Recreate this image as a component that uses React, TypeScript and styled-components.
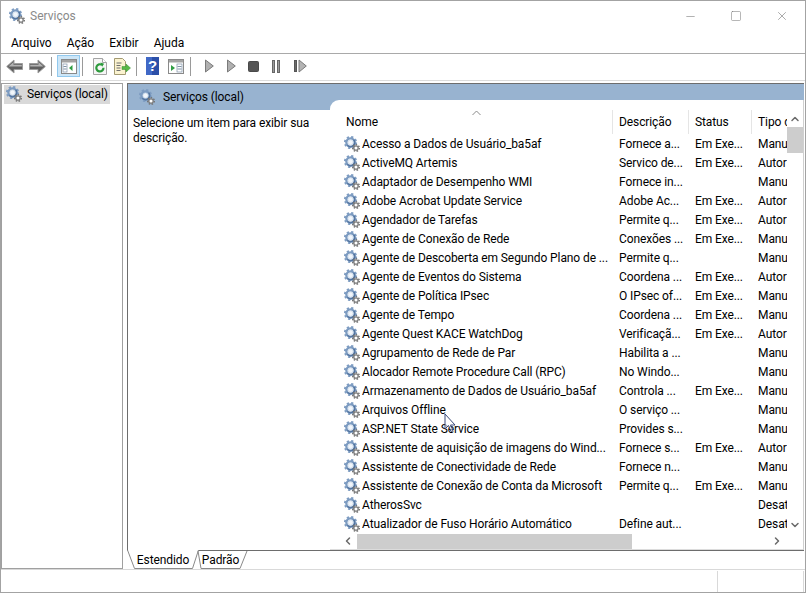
import React from "react";
import styled, { createGlobalStyle } from "styled-components";
import { Minus, Square, X, ChevronUp, ChevronDown, ChevronLeft, ChevronRight } from "lucide-react";

const GlobalStyle = createGlobalStyle`
  html, body {
    margin: 0;
    padding: 0;
    background: #fff;
  }
  body {
    font-family: Roboto, "Open Sans", sans-serif;
    font-size: 12px;
    letter-spacing: -0.1px;
    color: #000;
  }
`;

const Window = styled.div`
  position: relative;
  width: 806px;
  height: 593px;
  box-sizing: border-box;
  border: 1px solid #a3a3a3;
  display: flex;
  flex-direction: column;
  background: #fff;
  overflow: hidden;
`;

const TitleBar = styled.div`
  height: 32px;
  display: flex;
  align-items: center;
  padding: 0 0 2px 8px;
  box-sizing: border-box;
  flex: none;
`;

const Title = styled.div`
  margin-left: 5px;
  color: #8a8a8a;
  letter-spacing: 0;
  flex: 1;
`;

const WinButton = styled.div`
  width: 46px;
  display: flex;
  justify-content: center;
  color: #6f6f6f;
`;

const MenuBar = styled.div`
  height: 20px;
  display: flex;
  align-items: center;
  gap: 15px;
  padding-left: 10px;
  border-bottom: 1px solid #a9a9a9;
  letter-spacing: 0;
  flex: none;
`;

const ToolBar = styled.div`
  display: flex;
  align-items: center;
  padding: 0 0 2px 2px;
  height: 24px;
  border-bottom: 1px solid #dcdcdc;
  flex: none;
`;

const ToolSlot = styled.div<{ $active?: boolean; $w?: number }>`
  width: ${(p) => p.$w ?? 23}px;
  height: 22px;
  box-sizing: border-box;
  display: flex;
  align-items: center;
  justify-content: center;
  flex: none;
  background: ${(p) => (p.$active ? "#cde6f7" : "transparent")};
  border: 1px solid ${(p) => (p.$active ? "#92c9ee" : "transparent")};
`;

const ToolSep = styled.div<{ $l: number; $r: number }>`
  width: 1px;
  height: 19px;
  margin: 0 ${(p) => p.$r}px 0 ${(p) => p.$l}px;
  background: #9a9a9a;
  flex: none;
`;

const Body = styled.div`
  height: 488px;
  display: flex;
  gap: 4px;
  padding: 2px 1px 0 0;
  box-sizing: border-box;
  flex: none;
`;

const TreePane = styled.div`
  width: 122px;
  box-sizing: border-box;
  border: 1px solid #a0a0a0;
  padding: 1px 2px;
  flex: none;
`;

const TreeItem = styled.div`
  display: flex;
  align-items: center;
  gap: 5px;
  width: 106px;
  height: 19px;
  padding: 0 0 1px 2px;
  box-sizing: border-box;
  background: #d9d9d9;
`;

const Main = styled.div`
  flex: 1;
  min-width: 0;
  display: flex;
  flex-direction: column;
`;

const Content = styled.div`
  height: 468px;
  box-sizing: border-box;
  border: 1px solid #6d6d6d;
  border-width: 1px 0 1px 1px;
  display: flex;
  flex-direction: column;
  background: #98b3d0;
  flex: none;
`;

const Banner = styled.div`
  height: 26px;
  display: flex;
  align-items: center;
  gap: 8px;
  padding: 0 0 1px 11px;
  box-sizing: border-box;
  flex: none;
`;

const Split = styled.div`
  flex: 1;
  min-height: 0;
  margin-top: -10px;
  display: flex;
`;

const Blurb = styled.div`
  width: 202px;
  margin-top: 10px;
  padding: 6px 5px;
  box-sizing: border-box;
  background: #fff;
  line-height: 15px;
  flex: none;
`;

const ListPanel = styled.div`
  flex: 1;
  min-width: 0;
  background: #fff;
  border-top-left-radius: 9px;
  display: flex;
  flex-direction: column;
  border-right: 1px solid #d0d0d0;
`;

const ListArea = styled.div`
  flex: 1;
  min-height: 0;
  display: flex;
  overflow: hidden;
`;

const Columns = styled.div`
  width: 457px;
  padding-top: 10px;
  overflow: hidden;
  flex: none;
`;

const Row = styled.div`
  display: grid;
  grid-template-columns: 283px 76px 63px 60px;
  height: 19px;
  align-items: center;
  white-space: nowrap;
`;

const HeaderRow = styled(Row)`
  position: relative;
  height: 24px;
  align-items: stretch;
`;

const HeaderCell = styled.div<{ $first?: boolean }>`
  display: flex;
  align-items: flex-end;
  padding: 0 0 5px ${(p) => (p.$first ? 16 : 6)}px;
  border-right: 1px solid #e5e5e5;
  overflow: hidden;
`;

const SortMark = styled.svg`
  position: absolute;
  left: 142px;
  top: 0;
`;

const NameCell = styled.div`
  display: flex;
  align-items: center;
  gap: 2px;
  padding-left: 14px;
  min-width: 0;
  overflow: hidden;
`;

const Cell = styled.div`
  padding-left: 6px;
  overflow: hidden;
`;

const VScroll = styled.div`
  width: 16px;
  padding-top: 10px;
  display: flex;
  flex-direction: column;
  align-items: center;
  color: #6a6a6a;
  flex: none;
`;

const Arrow = styled.div`
  height: 17px;
  display: flex;
  align-items: center;
  justify-content: center;
  flex: none;
`;

const VThumb = styled.div`
  width: 16px;
  height: 26px;
  background: #cdcdcd;
  flex: none;
`;

const VTrack = styled.div`
  flex: 1;
  width: 100%;
`;

const HScroll = styled.div`
  height: 16px;
  display: flex;
  align-items: center;
  padding: 0 20px 0 12px;
  color: #6a6a6a;
  border-bottom: 1px solid #dcdcdc;
  flex: none;
`;

const HThumb = styled.div`
  width: 275px;
  height: 15px;
  margin-left: 3px;
  background: #cdcdcd;
`;

const HTrack = styled.div`
  flex: 1;
`;

const TabStrip = styled.div`
  height: 18px;
  display: flex;
  flex: none;
`;

const Tab = styled.div<{ $w: number }>`
  position: relative;
  width: ${(p) => p.$w}px;
  height: 18px;
  display: flex;
  align-items: center;
  justify-content: center;
  flex: none;
`;

const TabShape = styled.svg<{ $top: number; $left: number }>`
  position: absolute;
  left: ${(p) => p.$left}px;
  top: ${(p) => p.$top}px;
  overflow: visible;
`;

const TabLabel = styled.span`
  position: relative;
`;

const StatusBar = styled.div`
  height: 23px;
  box-sizing: border-box;
  border-top: 1px solid #d9d9d9;
  display: flex;
  justify-content: flex-end;
  padding: 1px 1px 0 0;
  flex: none;
`;

const StatusCell = styled.div`
  width: 87px;
  box-sizing: border-box;
  border: 1px solid #d9d9d9;
  border-width: 0 1px;
`;

const Pointer = styled.svg`
  position: absolute;
  left: 443px;
  top: 412px;
`;

const GearIcon = styled.svg`
  flex: none;
`;

const dash = (r: number, teeth: number) => {
  const step = (2 * Math.PI * r) / teeth / 2;
  return `${step} ${step}`;
};

const ServiceIcon = () => (
  <GearIcon width="16" height="16" viewBox="0 0 16 16">
    <circle cx="6.500" cy="6.500" r="5.600" fill="none" stroke="#7f9dc2" strokeWidth="2" strokeDasharray={dash(5.6, 8)} />
    <circle cx="6.500" cy="6.500" r="4.100" fill="none" stroke="#7c9bc1" strokeWidth="2.400" />
    <path d="M9.600 3.600a4.200 4.200 0 0 1-6.200 5.800" fill="none" stroke="#50719c" strokeWidth="1.300" />
    <circle cx="6.500" cy="6.500" r="2.600" fill="#f2f6fb" stroke="#c0d0e2" strokeWidth="0.600" />
    <circle cx="12" cy="12" r="3.300" fill="none" stroke="#727272" strokeWidth="1.400" strokeDasharray={dash(3.3, 7)} />
    <circle cx="12" cy="12" r="2.200" fill="#fff" stroke="#7c7c7c" strokeWidth="1.300" />
  </GearIcon>
);

const BackArrow = ({ flip }: { flip?: boolean }) => (
  <svg width="17" height="15" viewBox="0 0 17 15" style={flip ? { transform: "scaleX(-1)" } : undefined}>
    <path d="M.7 7.500 8 1v3.500h8.500v6H8V14z" fill="#5f5f5f" stroke="#9c9c9c" strokeWidth="1" strokeLinejoin="round" />
    <path d="M2.500 7.500 7.500 3v2.800h8.300v1.700z" fill="#b2b2b2" />
  </svg>
);

const ConsoleIcon = ({ kind }: { kind: "tree" | "action" }) => (
  <svg width="16" height="15" viewBox="0 0 16 15">
    <rect x="0.500" y="0.500" width="15" height="14" fill="#fff" stroke="#8a8a8a" />
    <rect x="1" y="1" width="14" height="2.500" fill="#a4a4a4" />
    {kind === "tree" ? (
      <>
        <rect x="2" y="5" width="4" height="8" fill="#fff" stroke="#7f93a8" strokeWidth="0.700" />
        <path d="M2.500 7.500h3M2.500 10h3" stroke="#7f93a8" />
        <path d="M11.500 6v6L8 9z" fill="#2f9e44" />
      </>
    ) : (
      <>
        <path d="M3 6v6l4-3z" fill="#2f9e44" />
        <rect x="9" y="5" width="5" height="8" fill="#fff" stroke="#7f93a8" strokeWidth="0.700" />
        <path d="M9.500 7.500h4M9.500 10h4" stroke="#7f93a8" />
      </>
    )}
  </svg>
);

const RefreshIcon = () => (
  <svg width="14" height="17" viewBox="0 0 14 17">
    <path d="M.5.5h9l4 4v12H.5z" fill="#f6f6f6" stroke="#a4a4a4" />
    <path d="M9.500.5v4h4" fill="#fff" stroke="#a4a4a4" />
    <path d="M10.500 9.800a3.600 3.600 0 1 1-1.400-2.800" fill="none" stroke="#2c9a3c" strokeWidth="2.200" />
    <path d="M7.500 4.500l3.600 1.300-2 3z" fill="#2c9a3c" />
  </svg>
);

const ExportIcon = () => (
  <svg width="17" height="17" viewBox="0 0 17 17">
    <path d="M.5.5h8l3 3v13H.5z" fill="#fbf3d0" stroke="#a39a72" />
    <path d="M2.500 5h5M2.500 7.500h4M2.500 10h4M2.500 12.500h4" stroke="#6f6f6f" />
    <path d="M8 8.500h4V6l4.500 4-4.500 4v-2.500H8z" fill="#58b947" stroke="#3b8f31" strokeWidth="0.500" />
  </svg>
);

const HelpIcon = () => (
  <svg width="13" height="18" viewBox="0 0 13 18">
    <rect width="13" height="18" fill="#2b4fa8" />
    <rect width="6" height="18" fill="#4068c6" />
    <text x="6.500" y="14" fontSize="15" fontWeight="700" fill="#fff" textAnchor="middle" fontFamily="Liberation Sans, sans-serif">?</text>
  </svg>
);

const PlayIcon = () => (
  <svg width="9" height="14" viewBox="0 0 9 14">
    <path d="M.5 1 8.300 7 .5 13z" fill="#b0b0b0" stroke="#7a7a7a" />
  </svg>
);

const StopIcon = () => (
  <svg width="11" height="11" viewBox="0 0 11 11">
    <rect x="0.500" y="0.500" width="10" height="10" rx="1" fill="#555" stroke="#4a4a4a" />
  </svg>
);

const PauseIcon = () => (
  <svg width="8" height="13" viewBox="0 0 8 13">
    <rect x="0.500" y="0.500" width="2" height="12" fill="#9a9a9a" stroke="#666" />
    <rect x="5.500" y="0.500" width="2" height="12" fill="#9a9a9a" stroke="#666" />
  </svg>
);

const ResumeIcon = () => (
  <svg width="13" height="14" viewBox="0 0 13 14">
    <rect x="0.500" y="1.500" width="2" height="11" fill="#6a6a6a" stroke="#555" />
    <path d="M5 1 12.300 7 5 13z" fill="#b4b4b4" stroke="#7a7a7a" />
  </svg>
);

type Service = { name: string; desc: string; status: string; kind: string };

const services: Service[] = [
  { name: "Acesso a Dados de Usuário_ba5af", desc: "Fornece a...", status: "Em Exe...", kind: "Manu" },
  { name: "ActiveMQ Artemis", desc: "Servico de...", status: "Em Exe...", kind: "Autor" },
  { name: "Adaptador de Desempenho WMI", desc: "Fornece in...", status: "", kind: "Manu" },
  { name: "Adobe Acrobat Update Service", desc: "Adobe Ac...", status: "Em Exe...", kind: "Autor" },
  { name: "Agendador de Tarefas", desc: "Permite q...", status: "Em Exe...", kind: "Autor" },
  { name: "Agente de Conexão de Rede", desc: "Conexões ...", status: "Em Exe...", kind: "Manu" },
  { name: "Agente de Descoberta em Segundo Plano de ...", desc: "Permite q...", status: "", kind: "Manu" },
  { name: "Agente de Eventos do Sistema", desc: "Coordena ...", status: "Em Exe...", kind: "Autor" },
  { name: "Agente de Política IPsec", desc: "O IPsec of...", status: "Em Exe...", kind: "Manu" },
  { name: "Agente de Tempo", desc: "Coordena ...", status: "Em Exe...", kind: "Manu" },
  { name: "Agente Quest KACE WatchDog", desc: "Verificaçã...", status: "Em Exe...", kind: "Autor" },
  { name: "Agrupamento de Rede de Par", desc: "Habilita a ...", status: "", kind: "Manu" },
  { name: "Alocador Remote Procedure Call (RPC)", desc: "No Windo...", status: "", kind: "Manu" },
  { name: "Armazenamento de Dados de Usuário_ba5af", desc: "Controla ...", status: "Em Exe...", kind: "Manu" },
  { name: "Arquivos Offline", desc: "O serviço ...", status: "", kind: "Manu" },
  { name: "ASP.NET State Service", desc: "Provides s...", status: "", kind: "Manu" },
  { name: "Assistente de aquisição de imagens do Wind...", desc: "Fornece s...", status: "Em Exe...", kind: "Autor" },
  { name: "Assistente de Conectividade de Rede", desc: "Fornece n...", status: "", kind: "Manu" },
  { name: "Assistente de Conexão de Conta da Microsoft", desc: "Permite q...", status: "Em Exe...", kind: "Manu" },
  { name: "AtherosSvc", desc: "", status: "", kind: "Desat" },
  { name: "Atualizador de Fuso Horário Automático", desc: "Define aut...", status: "", kind: "Desat" },
];

export default function App() {
  return (
    <>
      <GlobalStyle />
      <Window>
        <TitleBar>
          <ServiceIcon />
          <Title>Serviços</Title>
          <WinButton><Minus size={13} strokeWidth={1} /></WinButton>
          <WinButton><Square size={12} strokeWidth={1} /></WinButton>
          <WinButton><X size={14} strokeWidth={1} /></WinButton>
        </TitleBar>
        <MenuBar>
          <span>Arquivo</span>
          <span>Ação</span>
          <span>Exibir</span>
          <span>Ajuda</span>
        </MenuBar>
        <ToolBar>
          <ToolSlot $w={23}><BackArrow /></ToolSlot>
          <ToolSlot $w={23}><BackArrow flip /></ToolSlot>
          <ToolSep $l={2} $r={5} />
          <ToolSlot $active><ConsoleIcon kind="tree" /></ToolSlot>
          <ToolSep $l={2} $r={5} />
          <ToolSlot><RefreshIcon /></ToolSlot>
          <ToolSlot $w={22}><ExportIcon /></ToolSlot>
          <ToolSep $l={3} $r={4} />
          <ToolSlot><HelpIcon /></ToolSlot>
          <ToolSlot $w={24}><ConsoleIcon kind="action" /></ToolSlot>
          <ToolSep $l={2} $r={7} />
          <ToolSlot $w={22}><PlayIcon /></ToolSlot>
          <ToolSlot><PlayIcon /></ToolSlot>
          <ToolSlot $w={20}><StopIcon /></ToolSlot>
          <ToolSlot $w={26}><PauseIcon /></ToolSlot>
          <ToolSlot $w={22}><ResumeIcon /></ToolSlot>
        </ToolBar>
        <Body>
          <TreePane>
            <TreeItem>
              <ServiceIcon />
              <span>Serviços (local)</span>
            </TreeItem>
          </TreePane>
          <Main>
            <Content>
              <Banner>
                <ServiceIcon />
                <span>Serviços (local)</span>
              </Banner>
              <Split>
                <Blurb>Selecione um item para exibir sua descrição.</Blurb>
                <ListPanel>
                  <ListArea>
                    <Columns>
                      <HeaderRow>
                        <SortMark width="9" height="6" viewBox="0 0 9 6">
                          <path d="M.5 5 4.500 1l4 4" fill="none" stroke="#8a8a8a" />
                        </SortMark>
                        <HeaderCell $first>Nome</HeaderCell>
                        <HeaderCell>Descrição</HeaderCell>
                        <HeaderCell>Status</HeaderCell>
                        <HeaderCell>Tipo de Inicialização</HeaderCell>
                      </HeaderRow>
                      {services.map((s) => (
                        <Row key={s.name}>
                          <NameCell>
                            <ServiceIcon />
                            <span>{s.name}</span>
                          </NameCell>
                          <Cell>{s.desc}</Cell>
                          <Cell>{s.status}</Cell>
                          <Cell>{s.kind}</Cell>
                        </Row>
                      ))}
                    </Columns>
                    <VScroll>
                      <Arrow><ChevronUp size={12} strokeWidth={3} /></Arrow>
                      <VThumb />
                      <VTrack />
                      <Arrow><ChevronDown size={12} strokeWidth={3} /></Arrow>
                    </VScroll>
                  </ListArea>
                  <HScroll>
                    <ChevronLeft size={12} strokeWidth={3} />
                    <HThumb />
                    <HTrack />
                    <ChevronRight size={12} strokeWidth={3} />
                  </HScroll>
                </ListPanel>
              </Split>
            </Content>
            <TabStrip>
              <Tab $w={72}>
                <TabShape $left={0} $top={-1} width="72" height="19" viewBox="0 0 72 19">
                  <path d="M.5 0 7.500 18.500h58L71.500 0" fill="#fff" stroke="#8a8a8a" />
                </TabShape>
                <TabLabel>Estendido</TabLabel>
              </Tab>
              <Tab $w={43}>
                <TabShape $left={-1} $top={0} width="50" height="18" viewBox="0 0 50 18">
                  <path d="M0 0 3 17.500H42L49 0" fill="none" stroke="#8a8a8a" />
                </TabShape>
                <TabLabel>Padrão</TabLabel>
              </Tab>
            </TabStrip>
          </Main>
        </Body>
        <StatusBar>
          <StatusCell />
        </StatusBar>
        <Pointer width="13" height="21" viewBox="0 0 13 21">
          <path d="M1 1v15l3.500-3.500 2.500 6 2-1-2.500-5.500H11z" fill="#fff" fillOpacity="0.6" stroke="#3a4a7a" strokeWidth="1" />
        </Pointer>
      </Window>
    </>
  );
}
